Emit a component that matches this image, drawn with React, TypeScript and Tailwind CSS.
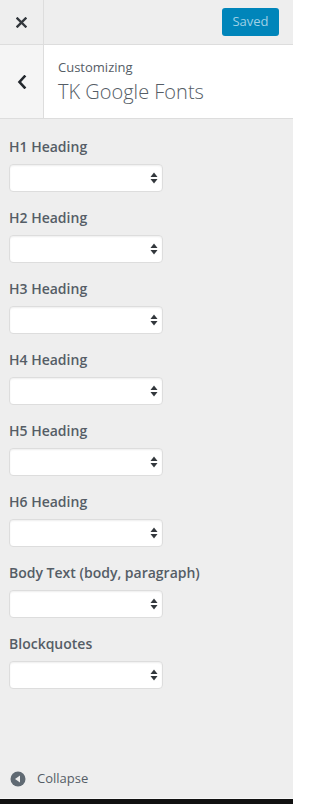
import React from "react";

const fields = [
  "H1 Heading",
  "H2 Heading",
  "H3 Heading",
  "H4 Heading",
  "H5 Heading",
  "H6 Heading",
  "Body Text (body, paragraph)",
  "Blockquotes",
];

function SelectArrows() {
  return (
    <svg width="8" height="14" viewBox="0 0 8 14" className="shrink-0">
      <path d="M4 1.5 L7.5 6 L0.5 6 Z" fill="#32373c" />
      <path d="M4 12.5 L7.5 8 L0.5 8 Z" fill="#32373c" />
    </svg>
  );
}

function FontField({ label }: { label: string }) {
  return (
    <div className="flex flex-col">
      <label className="text-[14px] leading-[20px] font-semibold text-[#555d66]">{label}</label>
      <div className="mt-[7px] mb-[16px] w-[154px] h-[28px] bg-white border border-[#ddd] rounded-[4px] shadow-[inset_0_1px_2px_rgba(0,0,0,0.07)] flex items-center justify-end pr-[4px]">
        <SelectArrows />
      </div>
    </div>
  );
}

export default function App() {
  return (
    <div
      className="w-[293px] h-[804px] bg-[#eee] flex flex-col overflow-hidden"
      style={{ fontFamily: '"Open Sans", "Noto Sans", sans-serif' }}
    >
      <div className="h-[45px] shrink-0 flex items-center border-b border-[#ddd]">
        <button className="w-[44px] h-full flex items-center justify-center border-r border-[#ddd]">
          <svg width="11" height="11" viewBox="0 0 11 11">
            <path d="M1.5 1.5 L9.5 9.5 M9.5 1.5 L1.5 9.5" stroke="#32373c" strokeWidth="2.4" strokeLinecap="square" />
          </svg>
        </button>
        <div className="flex-1" />
        <button className="mr-[14px] w-[57px] h-[28px] rounded-[3px] bg-[#0085ba] text-[#9ed0e6] text-[13px] flex items-center justify-center">
          Saved
        </button>
      </div>

      <div className="h-[74px] shrink-0 flex bg-white border-b border-[#ddd]">
        <button className="w-[44px] h-full flex items-center justify-center bg-[#f5f5f5] border-r border-[#ddd]">
          <svg width="10" height="14" viewBox="0 0 10 14">
            <path d="M7.5 1.5 L2.5 7 L7.5 12.5" fill="none" stroke="#23282d" strokeWidth="2.6" strokeLinecap="square" />
          </svg>
        </button>
        <div className="flex flex-col justify-center pl-[14px] pt-[1px]">
          <span className="text-[13px] leading-[18px] text-[#555d66]">Customizing</span>
          <span className="mt-[2px] text-[20px] leading-[28px] font-light text-[#555d66]">TK Google Fonts</span>
        </div>
      </div>

      <div className="flex flex-col px-[9px] pt-[18px]">
        {fields.map((f) => (
          <FontField key={f} label={f} />
        ))}
      </div>

      <div className="flex-1" />

      <div className="h-[38px] shrink-0 flex items-center pl-[10px]">
        <svg width="16" height="16" viewBox="0 0 16 16">
          <circle cx="8" cy="8" r="7.5" fill="#606a73" />
          <path d="M10 4.5 L5 8 L10 11.5 Z" fill="#eee" />
        </svg>
        <span className="ml-[11px] text-[13px] text-[#555d66]">Collapse</span>
      </div>

      <div className="h-px shrink-0 bg-[#f7f7f7]" />
      <div className="h-[5px] shrink-0 bg-[#111]" />
    </div>
  );
}
